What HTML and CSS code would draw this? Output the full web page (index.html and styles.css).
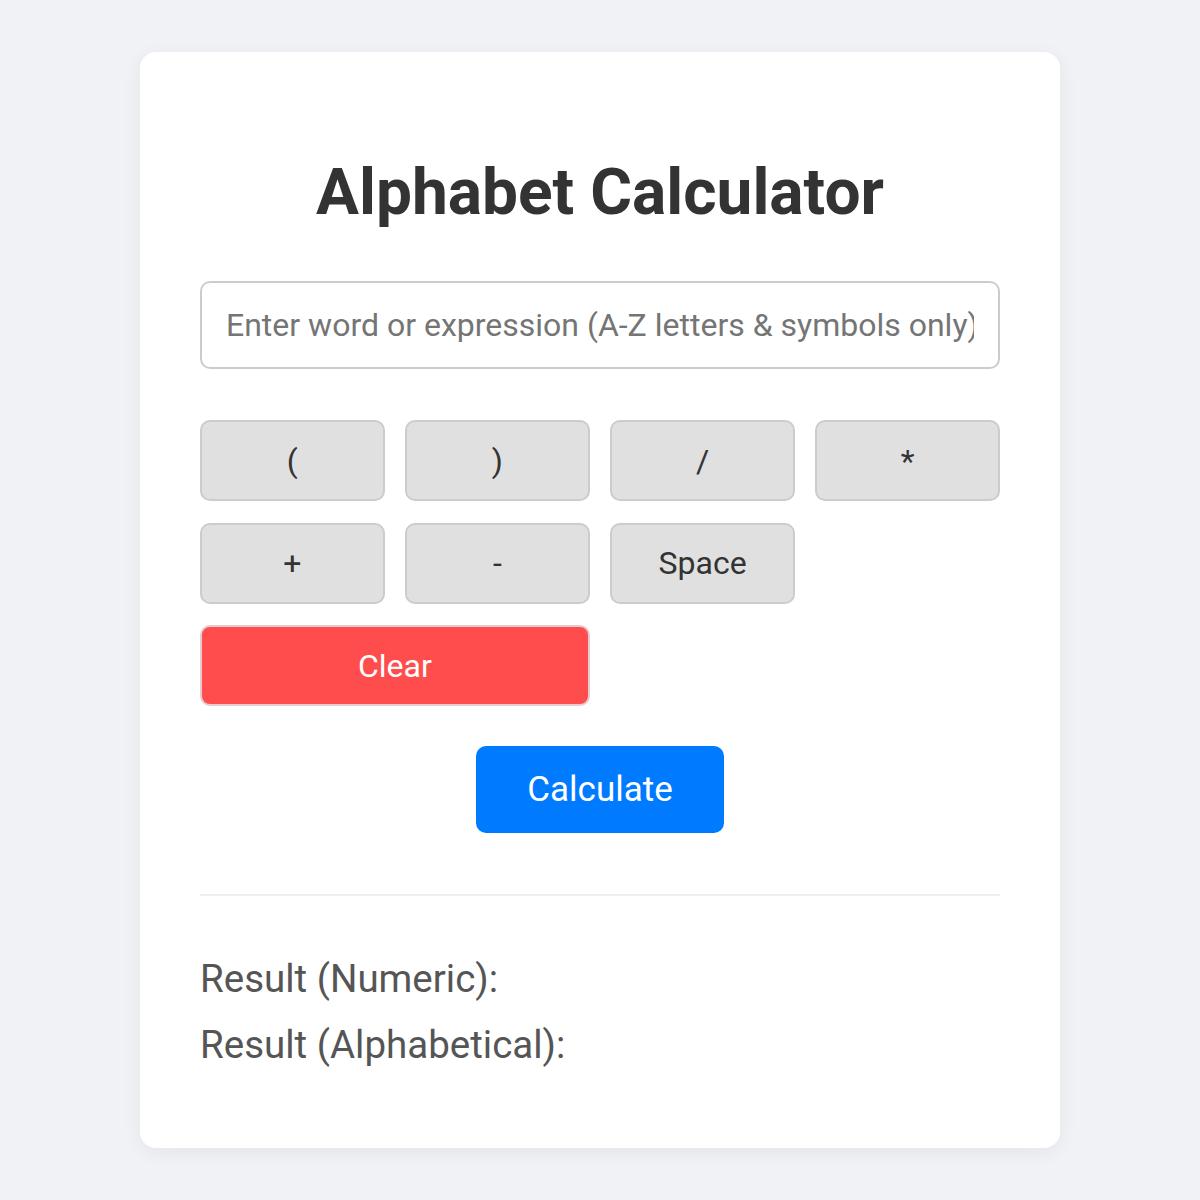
FILE: index.html
```html
<!DOCTYPE html>
<html lang="en">
<head>
<meta charset="utf-8">
<title>Alphabet Calculator</title>
<link rel="stylesheet" href="styles.css">
</head>
<body>
  <main class="card">
    <h1 class="title">Alphabet Calculator</h1>
    <input class="expr" type="text" placeholder="Enter word or expression (A-Z letters &amp; symbols only)">
    <div class="keys">
      <button class="key">(</button>
      <button class="key">)</button>
      <button class="key">/</button>
      <button class="key">*</button>
      <button class="key">+</button>
      <button class="key">-</button>
      <button class="key">Space</button>
      <button class="key key-clear">Clear</button>
    </div>
    <div class="actions">
      <button class="calc">Calculate</button>
    </div>
    <hr class="divider">
    <section class="results">
      <p class="result">Result (Numeric): <span class="value"></span></p>
      <p class="result">Result (Alphabetical): <span class="value"></span></p>
    </section>
  </main>
</body>
</html>
```

FILE: styles.css
```css
* { box-sizing: border-box; }

html, body {
  margin: 0;
  padding: 0;
}

body {
  background: #f0f2f5;
  font-family: Roboto, "Liberation Sans", Arial, sans-serif;
  padding-top: 52px;
  min-height: 1200px;
}

.card {
  width: 920px;
  margin: 0 auto;
  background: #ffffff;
  border-radius: 16px;
  padding: 60px;
  box-shadow: 0 4px 20px rgba(0, 0, 0, 0.06);
  display: flex;
  flex-direction: column;
}

.title {
  margin: 43px 0 51px;
  font-size: 64px;
  line-height: 75px;
  font-weight: 700;
  color: #333333;
  text-align: center;
}

.expr {
  width: 100%;
  height: 88px;
  flex: none;
  border: 2px solid #cccccc;
  border-radius: 10px;
  padding: 0 24px;
  font-family: inherit;
  font-size: 32px;
  color: #333333;
  outline: none;
}

.expr::placeholder {
  color: #757575;
}

.keys {
  margin-top: 51px;
  display: grid;
  grid-template-columns: repeat(4, 1fr);
  grid-auto-rows: 81px;
  gap: 21.5px 20.5px;
}

.key {
  background: #e0e0e0;
  border: 2px solid #cccccc;
  border-radius: 10px;
  font-family: inherit;
  font-size: 32px;
  color: #333333;
  padding: 0;
  cursor: pointer;
}

.key-clear {
  grid-column: span 2;
  background: #ff4d4d;
  border-color: #e6cccc;
  color: #ffffff;
}

.actions {
  display: flex;
  justify-content: center;
  margin-top: 40px;
}

.calc {
  width: 248px;
  height: 87px;
  background: #007bff;
  color: #ffffff;
  border: none;
  border-radius: 10px;
  font-family: inherit;
  font-size: 35px;
  padding: 0;
  cursor: pointer;
}

.divider {
  margin: 61px 0 0;
  border: none;
  height: 2px;
  flex: none;
  background: #eeeeee;
}

.results {
  margin-top: 61px;
  margin-bottom: 21px;
  display: flex;
  flex-direction: column;
  gap: 21px;
}

.result {
  margin: 0;
  font-size: 38.5px;
  line-height: 44.5px;
  color: #555555;
}
```
